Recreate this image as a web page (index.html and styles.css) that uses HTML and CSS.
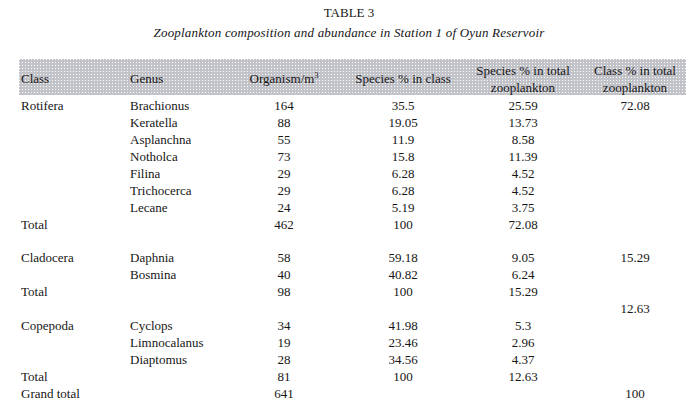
FILE: index.html
```html
<!DOCTYPE html>
<html>
<head>
<meta charset="utf-8">
<link rel="stylesheet" href="styles.css">
</head>
<body>
<div class="title">TABLE 3</div>
<div class="subtitle">Zooplankton composition and abundance in Station 1 of Oyun Reservoir</div>
<div class="tbl">
  <div class="row head">
    <div class="c1">Class</div>
    <div class="c2">Genus</div>
    <div class="c3">Organism/m<sup>3</sup></div>
    <div class="c4">Species % in class</div>
    <div class="c5">Species % in total<br>zooplankton</div>
    <div class="c6">Class % in total<br>zooplankton</div>
  </div>
  <div class="body">
    <div class="row"><div class="c1">Rotifera</div><div class="c2">Brachionus</div><div class="c3">164</div><div class="c4">35.5</div><div class="c5">25.59</div><div class="c6">72.08</div></div>
    <div class="row"><div class="c1"></div><div class="c2">Keratella</div><div class="c3">88</div><div class="c4">19.05</div><div class="c5">13.73</div><div class="c6"></div></div>
    <div class="row"><div class="c1"></div><div class="c2">Asplanchna</div><div class="c3">55</div><div class="c4">11.9</div><div class="c5">8.58</div><div class="c6"></div></div>
    <div class="row"><div class="c1"></div><div class="c2">Notholca</div><div class="c3">73</div><div class="c4">15.8</div><div class="c5">11.39</div><div class="c6"></div></div>
    <div class="row"><div class="c1"></div><div class="c2">Filina</div><div class="c3">29</div><div class="c4">6.28</div><div class="c5">4.52</div><div class="c6"></div></div>
    <div class="row"><div class="c1"></div><div class="c2">Trichocerca</div><div class="c3">29</div><div class="c4">6.28</div><div class="c5">4.52</div><div class="c6"></div></div>
    <div class="row"><div class="c1"></div><div class="c2">Lecane</div><div class="c3">24</div><div class="c4">5.19</div><div class="c5">3.75</div><div class="c6"></div></div>
    <div class="row"><div class="c1">Total</div><div class="c2"></div><div class="c3">462</div><div class="c4">100</div><div class="c5">72.08</div><div class="c6"></div></div>
    <div class="row"><div class="c1"></div><div class="c2"></div><div class="c3"></div><div class="c4"></div><div class="c5"></div><div class="c6"></div></div>
    <div class="row"><div class="c1">Cladocera</div><div class="c2">Daphnia</div><div class="c3">58</div><div class="c4">59.18</div><div class="c5">9.05</div><div class="c6">15.29</div></div>
    <div class="row"><div class="c1"></div><div class="c2">Bosmina</div><div class="c3">40</div><div class="c4">40.82</div><div class="c5">6.24</div><div class="c6"></div></div>
    <div class="row"><div class="c1">Total</div><div class="c2"></div><div class="c3">98</div><div class="c4">100</div><div class="c5">15.29</div><div class="c6"></div></div>
    <div class="row"><div class="c1"></div><div class="c2"></div><div class="c3"></div><div class="c4"></div><div class="c5"></div><div class="c6">12.63</div></div>
    <div class="row"><div class="c1">Copepoda</div><div class="c2">Cyclops</div><div class="c3">34</div><div class="c4">41.98</div><div class="c5">5.3</div><div class="c6"></div></div>
    <div class="row"><div class="c1"></div><div class="c2">Limnocalanus</div><div class="c3">19</div><div class="c4">23.46</div><div class="c5">2.96</div><div class="c6"></div></div>
    <div class="row"><div class="c1"></div><div class="c2">Diaptomus</div><div class="c3">28</div><div class="c4">34.56</div><div class="c5">4.37</div><div class="c6"></div></div>
    <div class="row"><div class="c1">Total</div><div class="c2"></div><div class="c3">81</div><div class="c4">100</div><div class="c5">12.63</div><div class="c6"></div></div>
    <div class="row"><div class="c1">Grand total</div><div class="c2"></div><div class="c3">641</div><div class="c4"></div><div class="c5"></div><div class="c6">100</div></div>
  </div>
</div>
</body>
</html>
```

FILE: styles.css
```css
html, body {
  margin: 0;
  padding: 0;
  background: #fff;
}
body {
  font-family: "Liberation Serif", "Times New Roman", serif;
  font-size: 13px;
  color: #161616;
}
.title {
  text-align: center;
  padding-top: 5px;
  line-height: 16px;
}
.subtitle {
  text-align: center;
  font-style: italic;
  line-height: 20px;
  margin-top: 2px;
  letter-spacing: 0.2px;
}
.tbl {
  margin-left: 19px;
  width: 667px;
  margin-top: 16px;
}
.row {
  display: grid;
  grid-template-columns: 110px 105px 100px 138px 102px 112px;
  height: 16.95px;
  line-height: 16.95px;
  white-space: nowrap;
}
.head {
  height: 36px;
  box-sizing: border-box;
  padding-top: 4px;
  line-height: 16.5px;
  align-items: center;
  background-color: #c2c2c9;
  background-image: conic-gradient(at 1px 1px, transparent 75%, #ffffff 0);
  background-size: 3px 3px;
}
.body {
  padding-top: 3px;
}
.c1 { padding-left: 2px; }
.c2 { padding-left: 1px; }
.c3, .c4, .c5 { text-align: center; }
.c6 { text-align: center; padding-left: 10px; }
sup {
  font-size: 8px;
  line-height: 0;
  vertical-align: 5px;
}
```
